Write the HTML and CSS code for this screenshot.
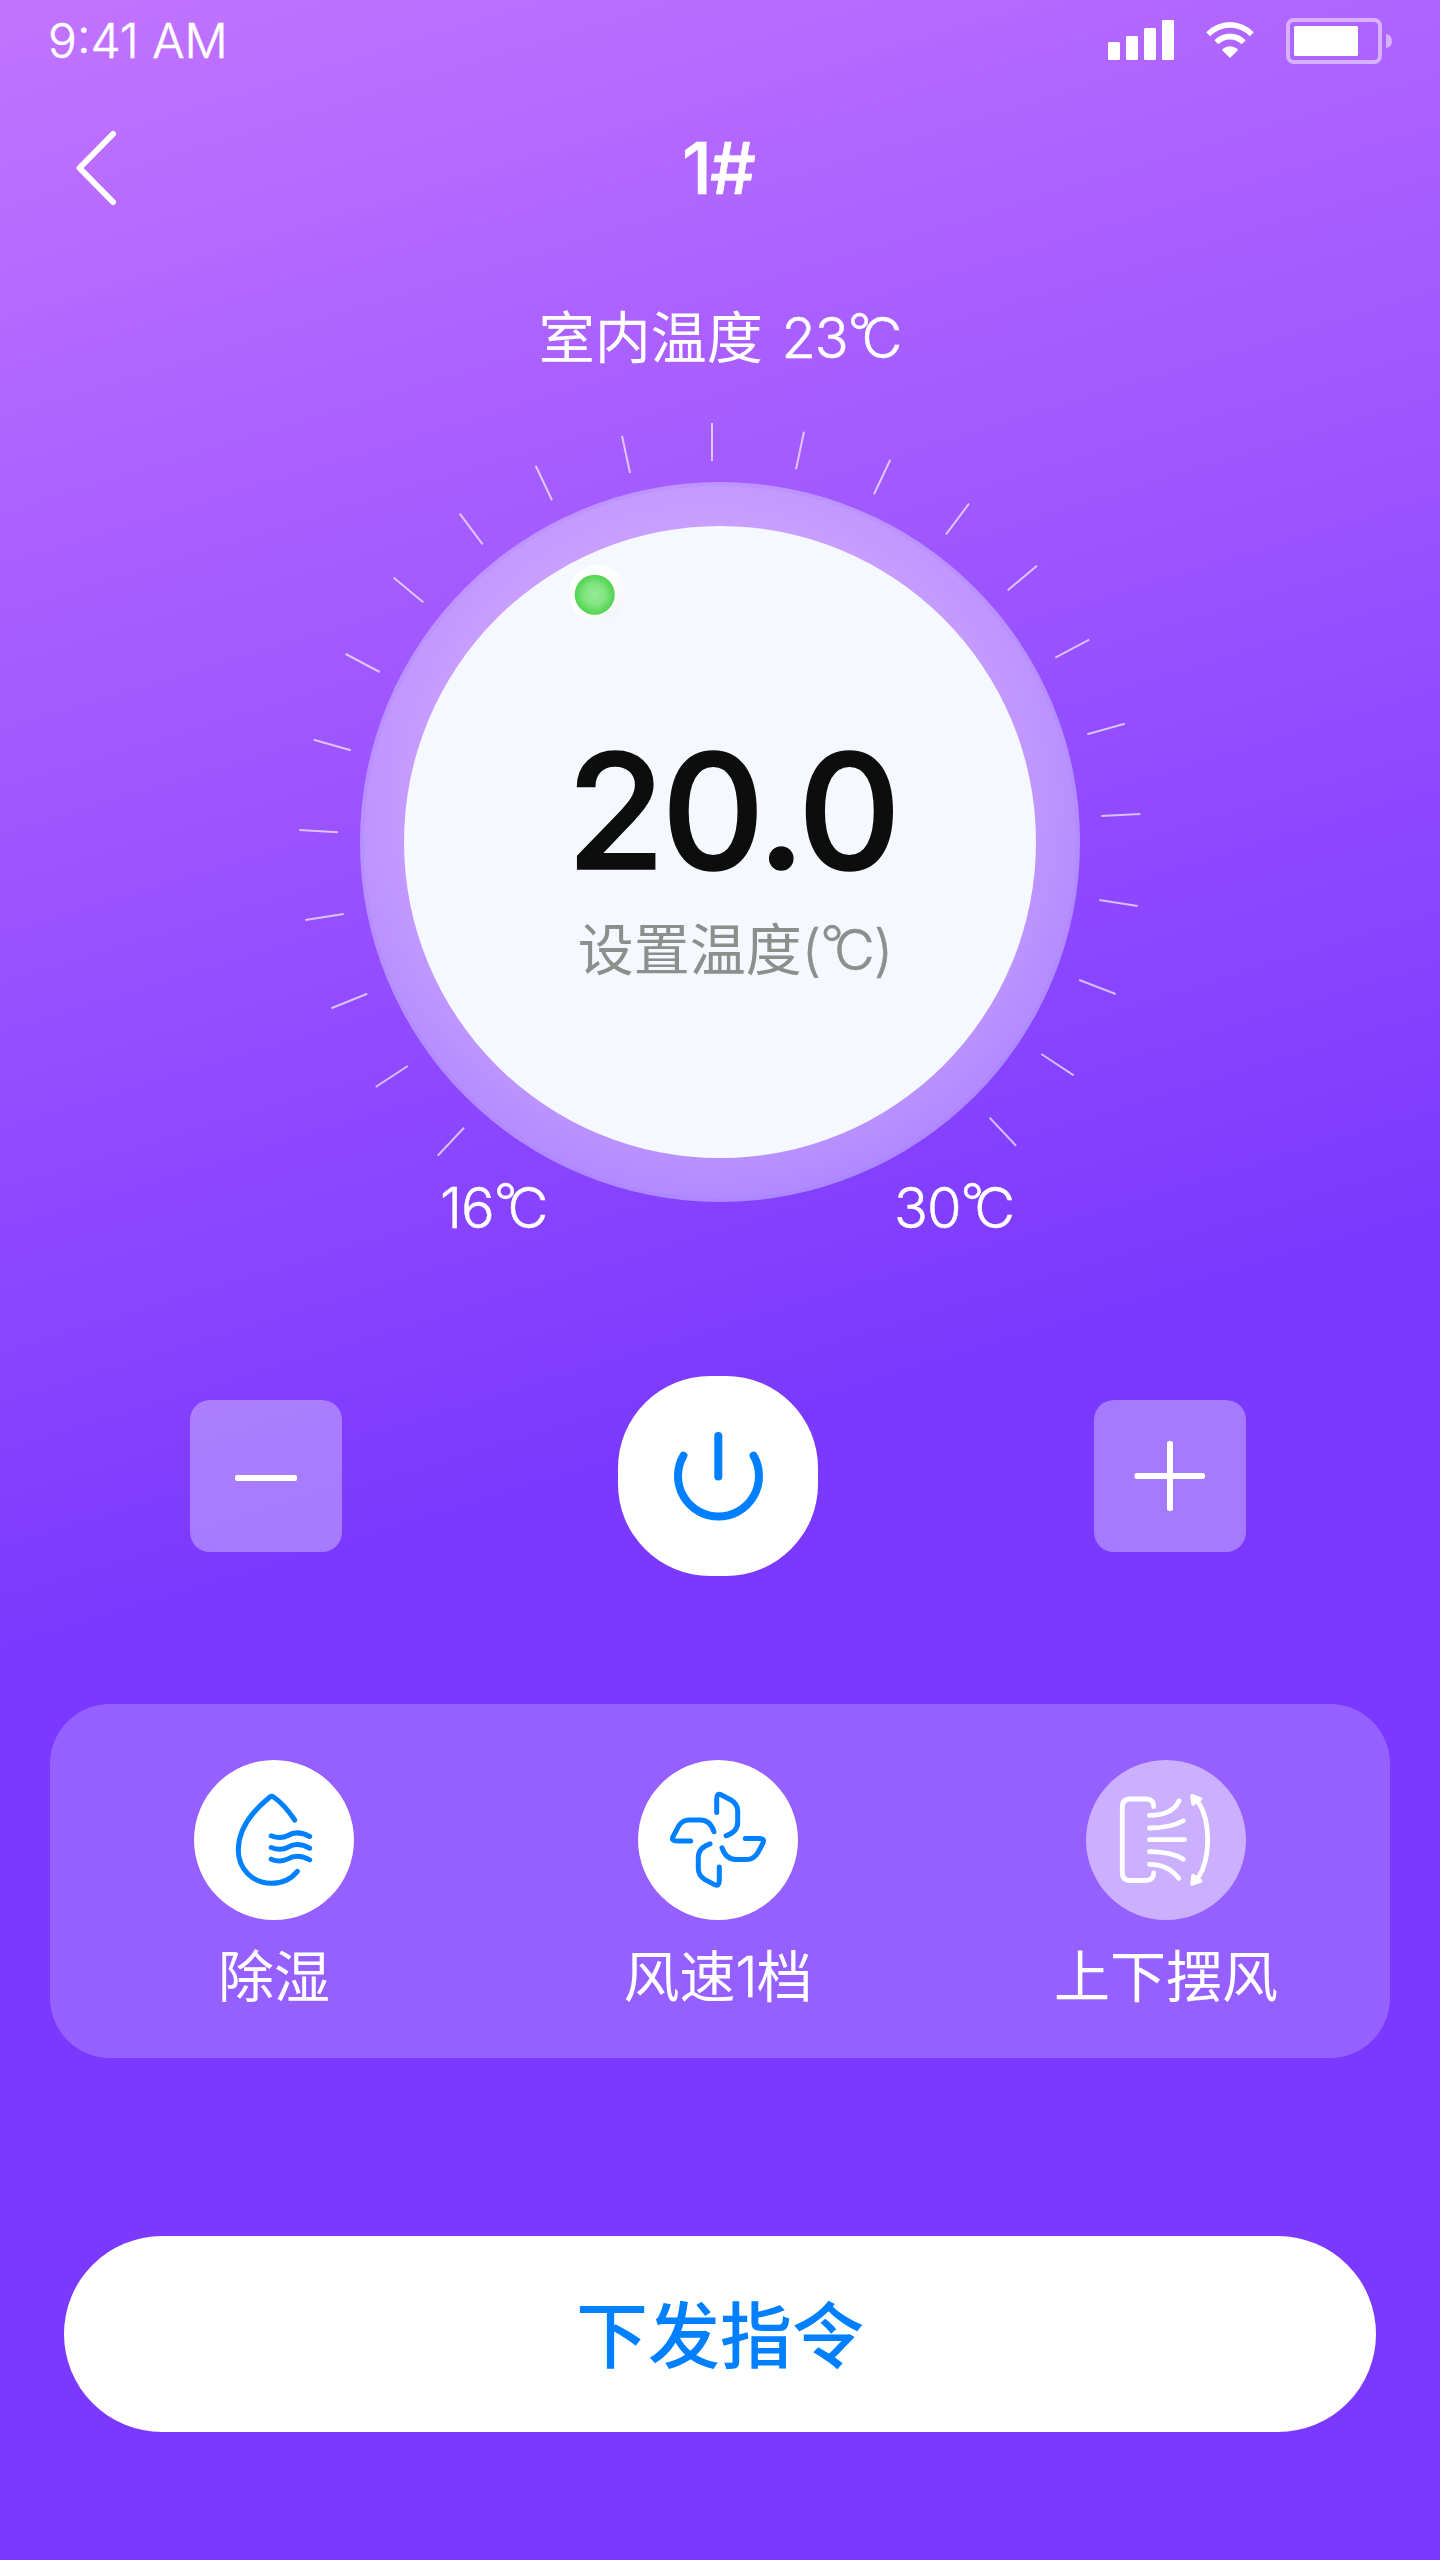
FILE: index.html
```html
<!DOCTYPE html>
<html lang="zh-CN">
<head>
<meta charset="utf-8">
<title>1#</title>
<link rel="stylesheet" href="styles.css">
</head>
<body>
<div class="screen">
  <header class="status">
    <span class="time">9:41 AM</span>
    <div class="indicators">
      <svg class="signal" width="66" height="40" viewBox="0 0 66 40" fill="#fff">
        <rect x="0" y="22" width="12" height="18" rx="1.5"/>
        <rect x="18" y="16" width="12" height="24" rx="1.5"/>
        <rect x="36" y="8" width="12" height="32" rx="1.5"/>
        <rect x="54" y="0" width="12" height="40" rx="1.5"/>
      </svg>
      <svg class="wifi" width="48" height="36" viewBox="0 0 48 36" fill="#fff">
        <path d="M0.2 10.2A33 33 0 0 1 47.8 10.2L43.8 14.2A27.5 27.5 0 0 0 4.2 14.2Z"/>
        <path d="M8.3 18.2A22 22 0 0 1 39.7 18.2L35.7 22.2A17 17 0 0 0 12.3 22.2Z"/>
        <path d="M16.2 28.2Q16.4 27 18 26A12.500 12.500 0 0 1 30 26Q31.600 27 31.800 28.200L24 36Z"/>
      </svg>
      <svg class="battery" width="106" height="46" viewBox="0 0 106 46">
        <rect x="2" y="2" width="92" height="42" rx="6" fill="none" stroke="#fff" stroke-opacity=".5" stroke-width="4"/>
        <rect x="8" y="8" width="64" height="30" rx="1.500" fill="#fff"/>
        <path d="M100 16Q106 17 106 23T100 30Z" fill="#fff" fill-opacity=".5"/>
      </svg>
    </div>
  </header>

  <nav class="navbar">
    <svg class="back" width="44" height="76" viewBox="75 130 44 76" fill="none" stroke="#fff" stroke-width="6" stroke-linecap="round" stroke-linejoin="round"><path d="M113 134L79.500 168L113 202"/></svg>
    <h1 class="title">1#</h1>
  </nav>

  <p class="room">室内温度<span class="num"> 23<span class="deg">°</span>C</span></p>

  <section class="dial">
    <svg class="dial-art" width="860" height="810" viewBox="290 410 860 810">
      <defs>
        <radialGradient id="green"><stop offset="0" stop-color="#98ea97"/><stop offset=".5" stop-color="#84e583"/><stop offset="1" stop-color="#4fd34f"/></radialGradient>
        <linearGradient id="halo" x1="0" y1="0" x2="1" y2="1"><stop offset=".45" stop-color="#fff"/><stop offset=".9" stop-color="#f3f4f8"/></linearGradient>
        <radialGradient id="ring"><stop offset=".87" stop-color="#fff" stop-opacity=".42"/><stop offset=".97" stop-color="#f8f8ff" stop-opacity=".4"/></radialGradient>
      </defs>
      <path class="ticks" d="M712 423V461M622 435.700L630 473M535.700 465.700L552 500.300M459.700 513.700L482.700 544.300M393.700 577.700L423.300 602.300M345.700 654L379.700 672M313.700 739.700L350.700 750.300M299.300 830L338 832.200M804 431.700L796 469.300M890.300 459.700L874 494.300M969 503.700L946 534.300M1037 565.700L1007.700 590.300M1089.300 639.700L1055.300 657.700M1124.700 723.700L1087.300 734.300M1140.300 814L1101.300 816M305.300 920L343.700 914M331.300 1008.300L367.300 993.700M375.700 1087L407.700 1066M437.700 1155.700L464 1127.700M1137.700 906L1099.300 900M1115.700 994L1079.300 980M1073.700 1075.300L1041.300 1054M1016 1145.700L989.700 1117.700"/>
      <circle cx="720" cy="842" r="360" fill="url(#ring)"/>
      <circle cx="720" cy="842" r="358" fill="none" stroke="#8c78ff" stroke-opacity=".14" stroke-width="4"/>
      <circle cx="720" cy="842" r="316" fill="#f5f8ff"/>
      <circle cx="597.500" cy="593.500" r="28.500" fill="url(#halo)"/>
      <circle cx="594.700" cy="594.700" r="20" fill="url(#green)"/>
    </svg>
    <div class="reading">
      <strong class="value">20.0</strong>
      <span class="caption">设置温度<span class="num">(<span class="deg">°</span>C)</span></span>
    </div>
  </section>

  <div class="range"><span class="num">16<span class="deg">°</span>C</span><span class="num">30<span class="deg">°</span>C</span></div>

  <div class="controls">
    <button class="step"><svg width="80" height="80" viewBox="0 0 80 80" fill="#fff"><rect x="9" y="39" width="62" height="6" rx="2"/></svg></button>
    <button class="power"><svg width="100" height="100" viewBox="668 1426 100 100" fill="none" stroke="#0080ff" stroke-width="8" stroke-linecap="round"><path d="M718.300 1436V1476.500"/><path d="M683.400 1455.800A40.500 40.500 0 1 0 753.600 1455.800"/></svg></button>
    <button class="step"><svg width="80" height="80" viewBox="0 0 80 80" fill="#fff"><rect x="4.500" y="37" width="70.500" height="6" rx="2.500"/><rect x="37" y="5" width="6" height="70" rx="2.500"/></svg></button>
  </div>

  <section class="modes">
    <div class="mode mode-dry">
      <span class="disc"><svg width="160" height="160" viewBox="194 1760 160 160" fill="none" stroke="#0080ff" stroke-width="5" stroke-linecap="round" stroke-linejoin="round">
        <path d="M294.700 1820Q284 1804 273.500 1797Q271.700 1795.700 269.900 1797Q238.300 1822.500 238.300 1850C238.300 1869 252.500 1883.300 271.700 1883.300Q287.500 1883.300 297.300 1871.300"/>
        <path d="M271.200 1835.800Q280.500 1839.500 288 1835.500Q297.500 1829.800 309.700 1836.500M271.200 1847.500Q280.500 1851.200 288 1847.200Q297.500 1841.500 309.700 1848.200M271.200 1859.200Q280.500 1862.900 288 1858.900Q297.500 1853.200 309.700 1859.900"/>
      </svg></span>
      <span class="label">除湿</span>
    </div>
    <div class="mode mode-fan">
      <span class="disc"><svg width="160" height="160" viewBox="638 1760 160 160" fill="none" stroke="#0080ff" stroke-width="5" stroke-linecap="round" stroke-linejoin="round">
        <path id="blade" d="M716.700 1812.500V1799Q716.700 1792.500 721.500 1795L731 1800Q737.700 1804 737.700 1811V1822Q737.700 1832 726 1835.800"/>
        <use href="#blade" transform="rotate(90 718 1839.800)"/><use href="#blade" transform="rotate(180 718 1839.800)"/><use href="#blade" transform="rotate(270 718 1839.800)"/>
      </svg></span>
      <span class="label">风速<span class="num">1</span>档</span>
    </div>
    <div class="mode mode-swing">
      <span class="disc disc-off"><svg width="160" height="160" viewBox="1086 1760 160 160" fill="none" stroke="#fff" stroke-width="4.800" stroke-linecap="round" stroke-linejoin="round">
        <path d="M1153.700 1806.500Q1153.700 1799 1145.500 1799H1130.500Q1122.300 1799 1122.300 1807V1872.500Q1122.300 1880.500 1130.500 1880.500H1145.500Q1153.700 1880.500 1153.700 1873"/>
        <path d="M1149.500 1815.400Q1172 1815.400 1179 1801M1149.500 1828Q1171 1828 1183.300 1820.800M1149.500 1839.700H1184.500M1149.500 1851.700Q1171 1851.700 1183.300 1859.200M1149.500 1864.400Q1168 1864.400 1178.700 1878.300"/>
        <path d="M1198 1801.500Q1207.700 1816 1207.700 1839.700T1198 1878"/>
        <path fill="#fff" stroke-width="3.500" d="M1191.900 1795.700L1200.500 1799L1193 1804ZM1191.900 1884.200L1200.500 1881L1193 1875.500Z"/>
      </svg></span>
      <span class="label">上下摆风</span>
    </div>
  </section>

  <button class="submit">下发指令</button>
</div>
</body>
</html>
```
FILE: styles.css
```css
* { box-sizing: border-box; margin: 0; padding: 0; }
body { font-family: "Noto Sans CJK SC", sans-serif; font-weight: 400; color: #fff; }
button { border: 0; font: inherit; color: inherit; }
svg { display: block; }
.time, .title, .value, .num { font-family: Inter, sans-serif; }
.time, .num { font-weight: 300; -webkit-text-stroke: .5px currentColor; }
.num { letter-spacing: -1px; }
.deg { line-height: 0; font-size: 52px; letter-spacing: -10px; vertical-align: 7px; }
.screen {
  display: flex; flex-direction: column;
  width: 1440px; height: 2560px;
  background: linear-gradient(163deg, #c274ff 0%, #7b39ff 55%);
}
.status { display: flex; justify-content: space-between; height: 82px; padding: 18px 48px 0 48px; }
.time { font-size: 48px; line-height: 46px; }
.indicators { display: flex; align-items: flex-start; }
.signal { margin-top: 2px; }
.wifi { margin: 4px 32px 0; }
.navbar { display: flex; justify-content: center; position: relative; height: 172px; align-items: center; }
.back { position: absolute; left: 75px; top: 48px; }
.title { padding-right: 4px; font-size: 72px; font-weight: 550; line-height: 86px; letter-spacing: -2px; -webkit-text-stroke: .6px currentColor; }
.room { height: 156px; padding-top: 42px; text-align: center; font-size: 56px; line-height: 76px; }
.room .num { white-space: pre; word-spacing: 4px; }
.dial { display: grid; justify-content: center; height: 760px; }
.dial-art, .reading { grid-area: 1 / 1; }
.ticks { fill: none; stroke: #fff; stroke-opacity: .65; stroke-width: 2; }
.reading { display: flex; flex-direction: column; align-items: center; padding: 306px 0 0 30px; z-index: 1; }
.value { margin-right: 6px; font-size: 160px; line-height: 190px; font-weight: 500; letter-spacing: -3.5px; color: #0c0d0c; -webkit-text-stroke: 1.6px currentColor; }
.caption { margin-top: 0; font-size: 56px; line-height: 80px; color: #8d8f8d; }
.range { display: flex; justify-content: space-between; height: 206px; padding: 0 426px 0 440px; font-size: 56px; line-height: 76px; }
.controls { display: flex; justify-content: space-between; align-items: center; height: 200px; padding: 0 194px 0 190px; }
.step, .power { display: flex; align-items: center; justify-content: center; }
.step { width: 152px; height: 152px; border-radius: 20px; background: rgba(255,255,255,.33); }
.power { width: 200px; height: 200px; border-radius: 92px; background: #fff; }
.modes { display: grid; grid-template-columns: 448px 440px 452px; height: 354px; margin: 128px 50px 0; padding-top: 56px; border-radius: 60px; background: rgba(255,255,255,.2); }
.mode { display: flex; flex-direction: column; align-items: center; }
.mode-swing { padding-left: 4px; }
.disc { width: 160px; height: 160px; border-radius: 50%; background: #fff; }
.disc-off { background: rgba(255,255,255,.5); }
.label { margin-top: 15px; font-size: 56px; line-height: 76px; }
.submit { height: 196px; margin: 178px 64px 0; padding-bottom: 8px; border-radius: 98px; background: #fff; color: #0080ff; font-size: 72px; font-weight: 500; }
```
